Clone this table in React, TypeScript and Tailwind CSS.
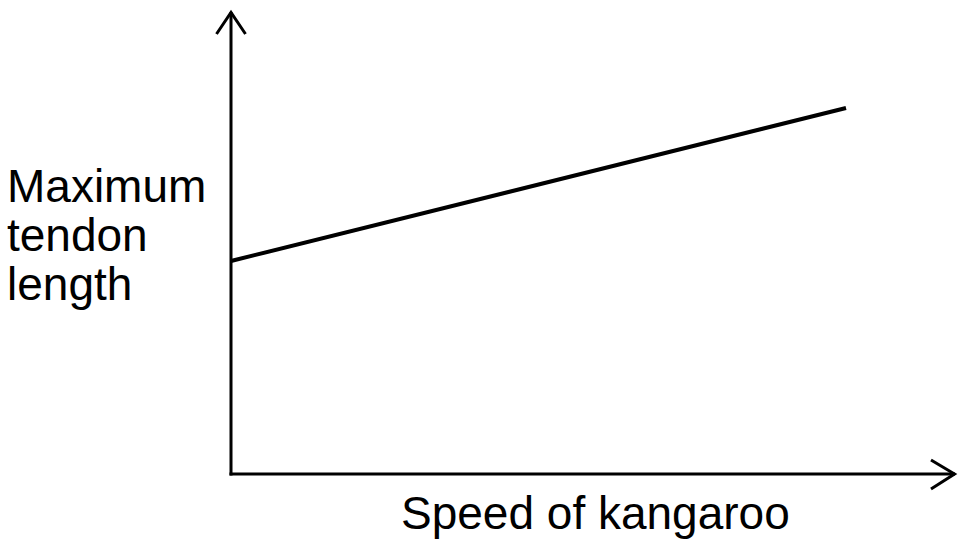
import React from "react";

export default function App() {
  return (
    <div className="relative w-[964px] h-[548px] bg-white overflow-hidden text-black" style={{ fontFamily: '"Liberation Sans", Arial, sans-serif' }}>
      <svg className="absolute inset-0" width="964" height="548" viewBox="0 0 964 548" fill="none">
        <g stroke="#000" strokeWidth="3" strokeLinecap="butt" strokeLinejoin="miter">
          <line x1="231" y1="12" x2="231" y2="475.5" />
          <line x1="229.5" y1="474" x2="955" y2="474" />
          <polyline points="216.5,34 231,12.5 245.5,34" />
          <polyline points="931,460 954.5,474 931,489" />
        </g>
        <line x1="231" y1="261" x2="846" y2="108" stroke="#000" strokeWidth="4" />
      </svg>
      <div className="relative flex flex-col">
        <p className="pl-[7px] pt-[162px] text-[46px] leading-[49px]">
          Maximum
          <br />
          tendon
          <br />
          length
        </p>
        <p className="pl-[401px] mt-[180px] text-[46px] leading-[49px] whitespace-nowrap">Speed of kangaroo</p>
      </div>
    </div>
  );
}
